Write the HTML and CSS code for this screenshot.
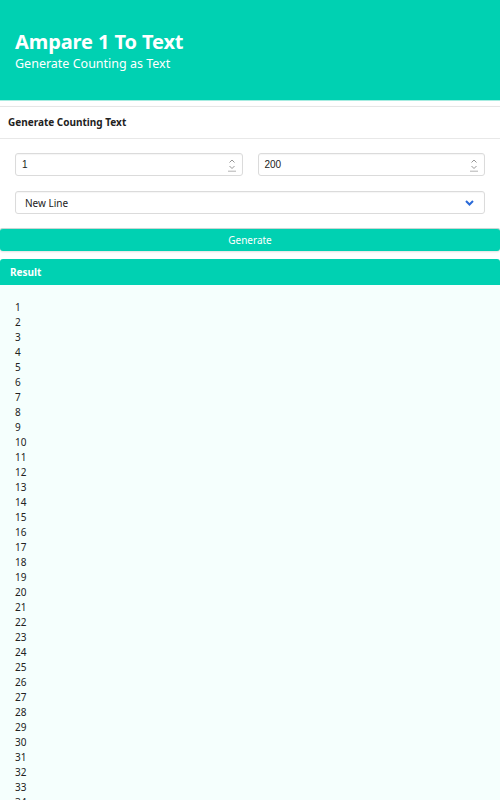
FILE: index.html
```html
<!DOCTYPE html>
<html>
<head>
<meta charset="utf-8">
<link rel="stylesheet" href="styles.css">
</head>
<body>
<section class="hero">
  <h1 class="title">Ampare 1 To Text</h1>
  <p class="subtitle">Generate Counting as Text</p>
</section>
<div class="card">
  <div class="card-header">Generate Counting Text</div>
  <div class="card-body">
    <div class="row">
      <div class="field">
        <span class="value">1</span>
        <svg class="spin" width="8" height="14" viewBox="0 0 8 14"><path d="M1.5 4.5 L4 2 L6.5 4.5" fill="none" stroke="#8a8a8a" stroke-width="0.9"/><path d="M1.5 8 L4 10.5 L6.5 8" fill="none" stroke="#8a8a8a" stroke-width="0.9"/><path d="M0 13.2 H8" stroke="#aaa" stroke-width="0.9"/></svg>
      </div>
      <div class="field">
        <span class="value">200</span>
        <svg class="spin" width="8" height="14" viewBox="0 0 8 14"><path d="M1.5 4.5 L4 2 L6.5 4.5" fill="none" stroke="#8a8a8a" stroke-width="0.9"/><path d="M1.5 8 L4 10.5 L6.5 8" fill="none" stroke="#8a8a8a" stroke-width="0.9"/><path d="M0 13.2 H8" stroke="#aaa" stroke-width="0.9"/></svg>
      </div>
    </div>
    <div class="field select">
      <span class="value sel">New Line</span>
      <svg width="9" height="6" viewBox="0 0 9 6"><path d="M1 1 L4.5 4.5 L8 1" fill="none" stroke="#2a6ad8" stroke-width="2"/></svg>
    </div>
  </div>
</div>
<button class="btn">Generate</button>
<div class="result">
  <div class="result-header">Result</div>
  <div class="result-body" id="out"></div>
</div>
<script>
var s = [];
for (var i = 1; i <= 34; i++) s.push('<div>' + i + '</div>');
document.getElementById('out').innerHTML = s.join('');
</script>
</body>
</html>
```
FILE: styles.css
```css
html, body {
  margin: 0;
  padding: 0;
  background: #fff;
  font-family: "Noto Sans", "Open Sans", sans-serif;
  overflow: hidden;
}
.hero {
  background: #00d1b2;
  height: 101px;
  box-sizing: border-box;
  padding: 29px 15px 0;
  color: #fff;
  border-bottom: 1px solid #a6ece0;
}
.title {
  margin: 0;
  font-size: 20px;
  line-height: 26px;
  font-weight: 700;
  letter-spacing: -0.1px;
}
.subtitle {
  margin: 1px 0 0;
  font-size: 12.5px;
  line-height: 16px;
  font-weight: 400;
}
.card {
  margin-top: 5px;
  border-top: 1px solid #e6e6e6;
  box-shadow: 0 1px 2px rgba(10,10,10,0.08);
}
.card-header {
  height: 31px;
  line-height: 31px;
  padding: 0 8px;
  font-size: 10px;
  font-weight: 700;
  color: #222;
  border-bottom: 1px solid #e8e8e8;
}
.card-body {
  padding: 14px 15px 14px;
  display: flex;
  flex-direction: column;
  gap: 15px;
}
.row {
  display: flex;
  gap: 15px;
}
.row .field { flex: 1; }
.field {
  height: 23px;
  box-sizing: border-box;
  border: 1px solid #dbdbdb;
  border-radius: 3px;
  display: flex;
  align-items: center;
  justify-content: space-between;
  padding: 0 6px 0 6px;
  box-shadow: inset 0 1px 1px rgba(10,10,10,0.04);
}
.value {
  font-family: "Liberation Sans", Arial, sans-serif;
  font-size: 10px;
  color: #222;
}
.value.sel {
  font-family: "Noto Sans", sans-serif;
  padding-left: 3px;
}
.select { padding-right: 10px; }
.spin { margin-top: 1px; }
.btn {
  display: block;
  width: 100%;
  margin: 0;
  height: 23px;
  border: none;
  border-top: 1px solid #c8d6d2;
  border-radius: 3px;
  background: #00d1b2;
  color: #fff;
  font-family: "Noto Sans", sans-serif;
  font-size: 10px;
  box-shadow: 0 1px 2px rgba(0,0,0,0.12);
  padding: 0;
}
.result {
  margin-top: 8px;
}
.result-header {
  background: #00d1b2;
  color: #fff;
  font-size: 10px;
  font-weight: 700;
  height: 26px;
  line-height: 26px;
  padding: 0 10px;
  border-radius: 3px 3px 0 0;
}
.result-body {
  background: #f5fffd;
  padding: 15px 15px 14px;
  font-size: 10px;
  line-height: 15px;
  color: #222;
  min-height: 600px;
}
```
